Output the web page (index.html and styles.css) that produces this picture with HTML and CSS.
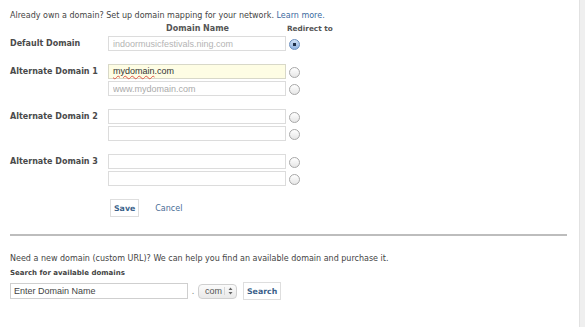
FILE: index.html
```html
<!DOCTYPE html>
<html lang="en">
<head>
    <meta charset="UTF-8">
    <title>Domain Mapping</title>
    <link rel="stylesheet" href="styles.css">
</head>
<body>
    <div class="frame">
        <div class="content">
            <p class="intro">Already own a domain? Set up domain mapping for your network. <a href="#">Learn more.</a></p>

            <form class="mapping">
                <div class="head">
                    <span class="head-name">Domain Name</span>
                    <span class="head-redirect">Redirect to</span>
                </div>

                <div class="group">
                    <label class="group-label">Default Domain</label>
                    <div class="fields">
                        <div class="line">
                            <input class="field" type="text" value="indoormusicfestivals.ning.com" disabled>
                            <input class="radio" type="radio" name="redirect" checked>
                        </div>
                    </div>
                </div>

                <div class="group">
                    <label class="group-label">Alternate Domain 1</label>
                    <div class="fields">
                        <div class="line">
                            <div class="field focused"><span class="typo">mydomain</span>.com</div>
                            <input class="radio" type="radio" name="redirect">
                        </div>
                        <div class="line">
                            <input class="field" type="text" placeholder="www.mydomain.com">
                            <input class="radio" type="radio" name="redirect">
                        </div>
                    </div>
                </div>

                <div class="group">
                    <label class="group-label">Alternate Domain 2</label>
                    <div class="fields">
                        <div class="line">
                            <input class="field" type="text">
                            <input class="radio" type="radio" name="redirect">
                        </div>
                        <div class="line">
                            <input class="field" type="text">
                            <input class="radio" type="radio" name="redirect">
                        </div>
                    </div>
                </div>

                <div class="group">
                    <label class="group-label">Alternate Domain 3</label>
                    <div class="fields">
                        <div class="line">
                            <input class="field" type="text">
                            <input class="radio" type="radio" name="redirect">
                        </div>
                        <div class="line">
                            <input class="field" type="text">
                            <input class="radio" type="radio" name="redirect">
                        </div>
                    </div>
                </div>

                <div class="actions">
                    <button type="button" class="btn">Save</button>
                    <a href="#" class="cancel">Cancel</a>
                </div>
            </form>

            <hr class="divider">

            <div class="search">
                <p class="search-intro">Need a new domain (custom URL)? We can help you find an available domain and purchase it.</p>
                <p class="search-title">Search for available domains</p>
                <div class="search-row">
                    <input class="search-input" type="text" value="Enter Domain Name">
                    <span class="dot">.</span>
                    <span class="tld">
                        <span>com</span>
                        <svg class="arrows" width="5" height="8" viewBox="0 0 5 8"><path d="M2.5 0.5 L4.5 3 L0.5 3 Z M0.5 5 L4.5 5 L2.5 7.5 Z" fill="#666"/></svg>
                    </span>
                    <button type="button" class="btn">Search</button>
                </div>
            </div>
        </div>
        <div class="edge"></div>
    </div>
</body>
</html>
```

FILE: styles.css
```css
body {
    margin: 0;
    padding: 0;
    background: #fff;
    font-family: "DejaVu Sans", sans-serif;
    font-size: 8px;
    color: #333;
}
.frame {
    display: flex;
    height: 327px;
}
.content {
    flex: 1;
    padding: 10px 0 0 10px;
}
.edge {
    width: 5px;
    background: #efefef;
    border-left: 1px solid #e2e2e2;
}
.intro {
    margin: 0;
    line-height: 12px;
    color: #444;
}
.intro a {
    color: #3b6aa0;
    text-decoration: none;
}
.head {
    display: flex;
    height: 14px;
    line-height: 14px;
    margin-left: 98px;
    font-weight: bold;
    color: #555;
}
.head-name {
    width: 179px;
    text-align: center;
}
.head-redirect {
    font-size: 7.3px;
}
.group {
    display: flex;
    margin-bottom: 13px;
}
.group-label {
    width: 98px;
    line-height: 15px;
    font-weight: bold;
    color: #4a4a4a;
}
.fields {
    display: flex;
    flex-direction: column;
    gap: 2px;
}
.line {
    display: flex;
    align-items: center;
}
.field {
    box-sizing: border-box;
    width: 178px;
    height: 15px;
    margin: 0;
    padding: 0 4px;
    border: 1px solid #dcdcdc;
    background: #fff;
    font-family: "Liberation Sans", sans-serif;
    font-size: 9px;
    line-height: 13px;
    color: #333;
}
.field:disabled {
    color: #b4b4b4;
}
.field::placeholder {
    color: #aaa;
}
.field.focused {
    background: #fefde4;
    border-color: #d8d8c8;
}
.typo {
    text-decoration: underline wavy #e0564a;
    text-decoration-thickness: 1px;
    text-underline-offset: 1px;
}
.radio {
    appearance: none;
    box-sizing: border-box;
    width: 11px;
    height: 11px;
    margin: 1px 0 0 3px;
    border: 1px solid #a8a8a8;
    border-radius: 50%;
    background: linear-gradient(#fff, #e6e6e6);
}
.radio:checked {
    border-color: #6b8fbf;
    background: radial-gradient(circle, #1e2e48 0 1.5px, transparent 2px), linear-gradient(#cfe0f5, #8fb2e0);
}
.actions {
    display: flex;
    align-items: center;
    gap: 16px;
    margin-left: 100px;
}
.btn {
    height: 18px;
    padding: 0 3px;
    border: 1px solid #dedede;
    background: #fff;
    font-family: "DejaVu Sans", sans-serif;
    font-size: 7.8px;
    font-weight: bold;
    color: #3b5f8a;
}
.cancel {
    color: #4a6d96;
    text-decoration: none;
}
.divider {
    width: 557px;
    margin: 17px 0 0 0;
    border: 0;
    border-top: 2px solid #bdbdbd;
}
.search-intro {
    margin: 17px 0 0 0;
    line-height: 12px;
    color: #444;
}
.search-title {
    margin: 2px 0 0 0;
    line-height: 12px;
    font-size: 7px;
    font-weight: bold;
    color: #444;
}
.search-row {
    display: flex;
    align-items: center;
    margin-top: 3px;
}
.search-input {
    box-sizing: border-box;
    width: 178px;
    height: 16px;
    margin: 0;
    padding: 0 3px;
    border: 1px solid #cfcfcf;
    font-family: "Liberation Sans", sans-serif;
    font-size: 9px;
    color: #444;
}
.dot {
    width: 10px;
    text-align: center;
    color: #777;
}
.tld {
    display: flex;
    align-items: center;
    justify-content: space-between;
    box-sizing: border-box;
    width: 39px;
    height: 15px;
    padding: 0 3px 0 6px;
    border: 1px solid #d0d0d0;
    border-radius: 4px;
    background: linear-gradient(#fbfbfb, #e9e9e9);
    font-family: "Liberation Sans", sans-serif;
    font-size: 9px;
    color: #555;
}
.arrows {
    display: block;
    padding-left: 3px;
    border-left: 1px solid #d6d6d6;
}
.search-row .btn {
    margin-left: 6px;
}
```
